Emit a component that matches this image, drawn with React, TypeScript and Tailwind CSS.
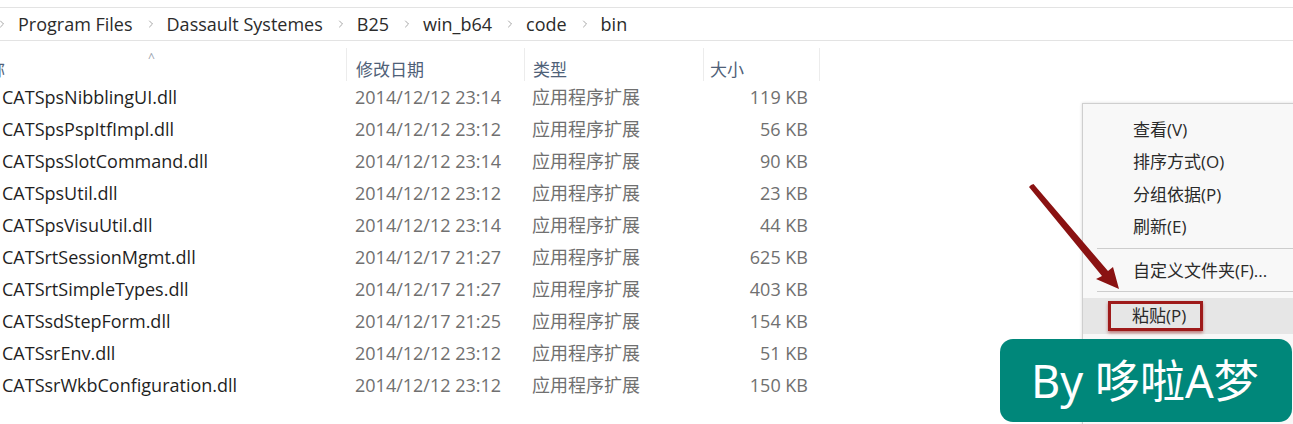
import { ChevronRight } from "lucide-react"

const crumbs = ["Program Files", "Dassault Systemes", "B25", "win_b64", "code", "bin"]

const files = [
  { name: "CATSpsNibblingUI.dll", date: "2014/12/12 23:14", size: "119 KB" },
  { name: "CATSpsPspItfImpl.dll", date: "2014/12/12 23:12", size: "56 KB" },
  { name: "CATSpsSlotCommand.dll", date: "2014/12/12 23:14", size: "90 KB" },
  { name: "CATSpsUtil.dll", date: "2014/12/12 23:12", size: "23 KB" },
  { name: "CATSpsVisuUtil.dll", date: "2014/12/12 23:14", size: "44 KB" },
  { name: "CATSrtSessionMgmt.dll", date: "2014/12/17 21:27", size: "625 KB" },
  { name: "CATSrtSimpleTypes.dll", date: "2014/12/17 21:27", size: "403 KB" },
  { name: "CATSsdStepForm.dll", date: "2014/12/17 21:25", size: "154 KB" },
  { name: "CATSsrEnv.dll", date: "2014/12/12 23:12", size: "51 KB" },
  { name: "CATSsrWkbConfiguration.dll", date: "2014/12/12 23:12", size: "150 KB" },
]

const font = { fontFamily: '"Open Sans", "Noto Sans CJK SC", sans-serif' }

function Crumb({ label }: { label: string }) {
  return (
    <div className="flex items-center">
      <ChevronRight size={12} strokeWidth={1.5} className="text-[#8a8a8a] ml-[12px] mr-[10px]" />
      <span>{label}</span>
    </div>
  )
}

function ContextMenu() {
  const item = "flex h-[32.5px] items-center pl-[50px]"
  return (
    <div className="absolute left-[1082px] top-[103px] w-[240px] h-[360px] border border-[#cfcfcf] bg-[#f8f8f8] pt-[9px] text-[17px] text-[#2a2a2a] shadow-[0_0_3px_rgba(0,0,0,0.15)]">
      <div className={item}>查看(V)</div>
      <div className={item}>排序方式(O)</div>
      <div className={item}>分组依据(P)</div>
      <div className={item}>刷新(E)</div>
      <div className="ml-[14px] mt-[5px] mb-[5px] h-px bg-[#cdcdcd]" />
      <div className="flex h-[33px] items-center pl-[50px]">自定义文件夹(F)...</div>
      <div className="ml-[14px] mt-[4px] mb-[6px] h-px bg-[#cdcdcd]" />
      <div className="flex h-[36px] items-center bg-[#e6e6e6] pl-[25px]">
        <div className="flex h-[30px] w-[95px] items-center border-[3px] border-[#9e1a1a] pl-[21px] shadow-[0_2px_3px_rgba(150,20,20,0.5)]">
          粘贴(P)
        </div>
      </div>
    </div>
  )
}

function Arrow() {
  return (
    <svg className="absolute left-[1026px] top-[180px]" width="100" height="115" viewBox="0 0 100 115">
      <polygon points="5,5 7.5,4 82,91 87,87 93,109 70,99 76,96 3,7" fill="#8a1212" />
    </svg>
  )
}

export default function App() {
  return (
    <div className="relative w-[1293px] h-[424px] overflow-hidden bg-white text-[#222]" style={font}>
      <div className="mt-[7px] flex h-[34px] items-center border-y border-[#e3e3e3] text-[18px] text-[#2b2b2b] -ml-[16px]">
        {crumbs.map((c) => (
          <Crumb key={c} label={c} />
        ))}
      </div>

      <div className="relative flex h-[40px] text-[17px] leading-[22px] text-[#4f6178]">
        <div className="absolute left-[148px] top-[6px] text-[12px] text-[#9aa3ad]">^</div>
        <div className="flex w-[346px] items-end overflow-hidden">
          <span className="-ml-[12px]">称</span>
        </div>
        <div className="flex w-[178px] items-end border-l border-[#ececec] pl-[9px] mt-[7px]">修改日期</div>
        <div className="flex w-[179px] items-end border-l border-[#ececec] pl-[8px] mt-[7px]">类型</div>
        <div className="flex w-[117px] items-end border-x border-[#ececec] pl-[6px] mt-[7px]">大小</div>
      </div>

      <div className="flex flex-col">
        {files.map((f) => (
          <div key={f.name} className="flex h-[32px] items-center text-[18px]">
            <div className="w-[355px] pl-[2px] text-[#1f1f1f]">{f.name}</div>
            <div className="w-[177px] text-[#707070]">{f.date}</div>
            <div className="w-[150px] text-[#707070]">应用程序扩展</div>
            <div className="w-[126px] text-right text-[#707070]">{f.size}</div>
          </div>
        ))}
      </div>

      <ContextMenu />
      <Arrow />

      <div className="absolute left-[1000px] top-[339px] flex h-[83px] w-[292px] items-center rounded-[13px] bg-[#00877a] pl-[31px] text-[45px] text-white" style={{ fontFamily: '"Noto Sans", "Noto Sans CJK SC", sans-serif' }}>
        By 哆啦A梦
      </div>
    </div>
  )
}
